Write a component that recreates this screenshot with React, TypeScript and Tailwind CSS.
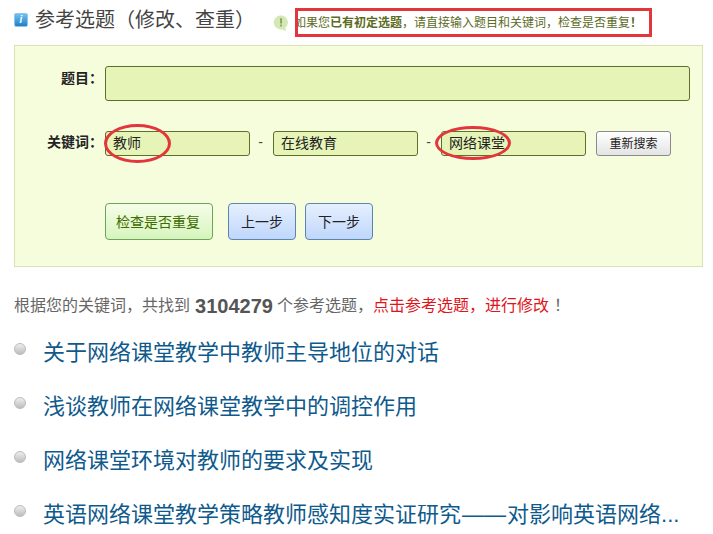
const font = { fontFamily: '"Liberation Sans", "Noto Sans CJK SC", sans-serif' };

const topics = [
  "关于网络课堂教学中教师主导地位的对话",
  "浅谈教师在网络课堂教学中的调控作用",
  "网络课堂环境对教师的要求及实现",
  "英语网络课堂教学策略教师感知度实证研究——对影响英语网络...",
];

function KeywordInput({ value }: { value: string }) {
  return (
    <div className="flex h-[25px] w-[145px] items-center rounded-[3px] border border-[#5f6f2a] bg-[#e6f4b8] pb-[2px] pl-[7px] text-[14px] leading-none text-[#222]">
      {value}
    </div>
  );
}

function Dash() {
  return <span className="mb-[3px] w-[23px] pr-[2px] text-center text-[14px] leading-none text-[#444]">-</span>;
}

function TopicText({ text }: { text: string }) {
  const [head, tail] = text.split("——");
  if (tail === undefined) return <>{text}</>;
  return (
    <>
      {head}
      <span className="mx-[1px]">——</span>
      {tail}
    </>
  );
}

export default function App() {
  return (
    <div className="relative h-[534px] w-[713px] overflow-hidden bg-white" style={font}>
      {/* Heading */}
      <div className="flex h-[45px] items-start pt-[8px]">
        <div className="ml-[14px] mt-[5px] flex h-[14px] w-[14px] items-center justify-center rounded-[2px] border border-[#8cc8ee] bg-gradient-to-b from-[#6ec1f0] to-[#1f7fc8] text-[10px] font-bold italic leading-none text-white">
          i
        </div>
        <h2 className="ml-[7px] w-[238px] text-[20px] leading-[24px] text-[#444]">参考选题（修改、查重）</h2>
        <svg className="mt-[7px] h-[16px] w-[16px]" viewBox="0 0 15 15">
          <path d="M7.5 .5a6.500 6.500 0 0 1 4.300 11.300c-.3 1 .1 2 .6 2.700-1.600 0-3-.5-3.700-1.200A6.500 6.500 0 1 1 7.500 .5z" fill="#d4e8b4" />
          <rect x="6.700" y="3" width="1.700" height="5" fill="#86a060" />
          <rect x="6.700" y="9" width="1.700" height="1.700" fill="#86a060" />
        </svg>
        <div className="ml-[6px] h-[29px] w-[357px] overflow-hidden border-[3px] border-[#e2363c] text-[12px] leading-[25px] whitespace-nowrap text-[#5c6b1e]">
          <div className="-ml-[4px]">
            如果您<b className="font-bold">已有初定选题</b>，请直接输入题目和关键词，检查是否重复<b>！</b>
          </div>
        </div>
      </div>

      {/* Form panel */}
      <div className="ml-[14px] h-[222px] w-[689px] border border-[#d8e2b4] bg-[#f5fddd] pt-[20px] pl-[90px]">
        <div className="flex items-center">
          <label className="-ml-[60px] mb-[11px] w-[60px] pr-[2px] text-right text-[14px] font-bold text-[#222]">题目：</label>
          <div className="h-[35px] w-[585px] rounded-[3px] border border-[#5f6f2a] bg-[#e6f4b8]" />
        </div>

        <div className="mt-[30px] flex items-center">
          <label className="-ml-[60px] mb-[2px] w-[60px] pr-[2px] text-right text-[14px] font-bold whitespace-nowrap text-[#222]">关键词：</label>
          <KeywordInput value="教师" />
          <Dash />
          <KeywordInput value="在线教育" />
          <Dash />
          <KeywordInput value="网络课堂" />
          <button className="ml-[10px] h-[25px] w-[75px] rounded-[3px] border border-[#8a8a8a] bg-gradient-to-b from-white to-[#e4e4e4] text-[12px] leading-none text-[#222]">
            重新搜索
          </button>
        </div>

        <div className="mt-[47px] flex items-center">
          <button className="h-[37px] w-[108px] rounded-[4px] border border-[#6da35a] bg-gradient-to-b from-[#f6fde8] to-[#d6f5bd] pr-[2px] text-[14px] leading-none text-[#3f6a00]">
            检查是否重复
          </button>
          <button className="ml-[15px] h-[37px] w-[68px] rounded-[4px] border border-[#5b85ad] bg-gradient-to-b from-[#e6f0fe] to-[#bfd6fb] text-[14px] leading-none text-[#222]">
            上一步
          </button>
          <button className="ml-[9px] h-[37px] w-[68px] rounded-[4px] border border-[#5b85ad] bg-gradient-to-b from-[#e6f0fe] to-[#bfd6fb] text-[14px] leading-none text-[#222]">
            下一步
          </button>
        </div>
      </div>

      {/* Result summary */}
      <p className="mt-[26px] ml-[14px] flex h-[26px] items-center whitespace-nowrap text-[16px] text-[#666]">
        根据您的关键词，共找到
        <b className="mr-[4px] ml-[5px] text-[20px] text-[#555]">3104279</b>
        个参考选题，
        <span className="text-[#e0151b]">点击参考选题，进行修改</span>
        <span className="pl-[5px]">！</span>
      </p>

      {/* Topic list */}
      <ul className="mt-[7px] ml-[14px]">
        {topics.map((t) => (
          <li key={t} className="flex h-[54px] items-center whitespace-nowrap">
            <span className="mb-[9px] h-[12px] w-[12px] rounded-full border border-[#bbb] bg-gradient-to-b from-[#eee] to-[#bdbdbd]" />
            <span className="ml-[17px] text-[22px] leading-[30px] text-[#0f5a8c]">
              <TopicText text={t} />
            </span>
          </li>
        ))}
      </ul>

      {/* Hand-drawn red circles on the screenshot */}
      <div className="absolute top-[124px] left-[104px] h-[39px] w-[67px] rounded-[50%] border-[3px] border-[#e2363c]" />
      <div className="absolute top-[126px] left-[435px] h-[34px] w-[76px] rounded-[50%] border-[3px] border-[#e2363c]" />
    </div>
  );
}
